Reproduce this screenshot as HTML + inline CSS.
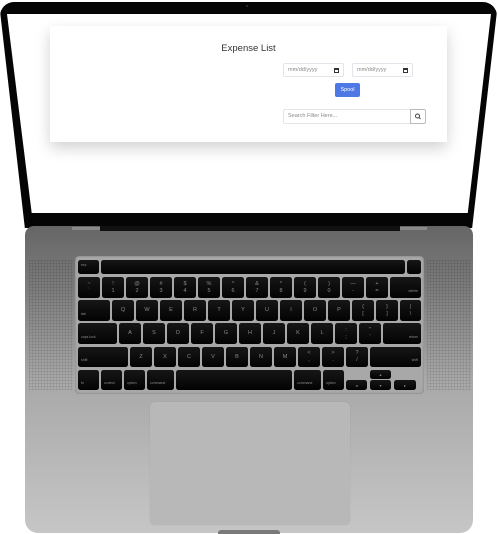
<!DOCTYPE html>
<html><head><meta charset="utf-8"><style>
*{box-sizing:border-box;margin:0;padding:0}
html,body{width:498px;height:534px;background:#fff;overflow:hidden;font-family:"Liberation Sans",sans-serif}
.abs{position:absolute}
.lid{left:0;top:2px;width:497px;height:226px;background:#050505;clip-path:polygon(0.6% 0,99.4% 0,100% 4%,95% 100%,5% 100%,0 4%);border-radius:14px 14px 6px 6px}
.scr{left:7px;top:14px;width:484px;height:199px;background:#fff;clip-path:polygon(0 0,100% 0,95.2% 100%,5.1% 100%)}
.base{left:25px;top:226px;width:448px;height:307px;border-radius:9px 9px 13px 13px;background:linear-gradient(#666 0%,#7c7c7c 20%,#a8a8a8 50%,#c6c6c6 100%)}
.card{left:50px;top:26px;width:397px;height:116px;background:#fff;box-shadow:0 6px 14px rgba(0,0,0,.18)}
.inp{background:#fff;border:1px solid #e2e5ea;border-radius:2px;font-size:5.5px;color:#888;padding-left:4px;line-height:12px}
.key{background:linear-gradient(#161616,#030303);border-radius:2.5px;color:#8a8a8a;font-size:5.5px;display:flex;align-items:center;justify-content:center;flex:none;width:22px;height:100%;position:relative;line-height:7px;text-align:center}
.sm{font-size:3.5px;align-items:flex-end;justify-content:flex-start;padding:0 0 3px 3px}
.smr{font-size:3.5px;align-items:flex-end;justify-content:flex-end;padding:0 3px 3px 0}
.row{position:absolute;left:78px;width:343px;display:flex;gap:2px}
.grill{top:260px;width:44px;height:130px;background-image:repeating-linear-gradient(90deg,rgba(0,0,0,.08) 0 1px,transparent 1px 3px),repeating-linear-gradient(0deg,rgba(0,0,0,.08) 0 1px,transparent 1px 3px)}
</style></head><body>
<div class="abs lid"></div>
<div class="abs" style="left:246px;top:5px;width:2px;height:2px;border-radius:50%;background:#333"></div>
<div class="abs scr"></div>
<div class="abs card">
 <div class="abs" style="left:0;width:397px;top:17px;text-align:center;font-size:9.5px;color:#333">Expense List</div>
 <div class="abs inp" style="left:233px;top:37px;width:61px;height:14px">mm/dd/yyyy<span style="position:absolute;right:4px;top:4px;width:5px;height:5px;border:1px solid #333;border-top-width:2px"></span></div>
 <div class="abs inp" style="left:302px;top:37px;width:61px;height:14px">mm/dd/yyyy<span style="position:absolute;right:4px;top:4px;width:5px;height:5px;border:1px solid #333;border-top-width:2px"></span></div>
 <div class="abs" style="left:285px;top:57px;width:25px;height:14px;background:#4e78e4;border-radius:2px;color:#fff;font-size:5.5px;text-align:center;line-height:14px">Spool</div>
 <div class="abs inp" style="left:233px;top:83px;width:128px;height:15px;line-height:13px;border-radius:2px 0 0 2px">Search Filter Here...</div>
 <div class="abs" style="left:360px;top:83px;width:16px;height:15px;border:1px solid #bbb;border-radius:0 2px 2px 0;background:#fff">
  <svg width="14" height="13" viewBox="0 0 14 13" style="position:absolute;left:0;top:0"><circle cx="6.5" cy="6" r="2" fill="none" stroke="#444" stroke-width="1"/><path d="M8 7.5L9.5 9" stroke="#444" stroke-width="1"/></svg>
 </div>
</div>
<div class="abs base"></div>
<div class="abs" style="left:72px;top:227px;width:28px;height:3px;background:#8a8a8a"></div>
<div class="abs" style="left:399px;top:227px;width:28px;height:3px;background:#8a8a8a"></div>
<div class="abs" style="left:100px;top:226px;width:300px;height:5px;background:#111"></div>
<div class="abs" style="left:218px;top:530px;width:62px;height:4px;background:#7a7a7a;border-radius:3px 3px 0 0"></div>
<div class="abs grill" style="left:29px"></div>
<div class="abs grill" style="left:427px"></div>
<div class="abs" style="left:75px;top:256px;width:349px;height:138px;background:#a8a8a8;border-radius:4px;box-shadow:inset 0 0 2px rgba(0,0,0,.3)"></div>
<div class="abs" style="left:150px;top:402px;width:200px;height:123px;background:#b8b8b8;border-radius:5px;box-shadow:0 0 1px rgba(0,0,0,.15)"></div>

<div class="row" style="top:260px;height:14px">
 <div class="key sm" style="width:21px;align-items:center">esc</div>
 <div class="key" style="flex:1"></div>
 <div class="key" style="width:14px"></div>
</div>
<div class="row" style="top:277px;height:21px">
 <div class="key">~<br>`</div><div class="key">!<br>1</div><div class="key">@<br>2</div><div class="key">#<br>3</div><div class="key">$<br>4</div><div class="key">%<br>5</div><div class="key">^<br>6</div><div class="key">&amp;<br>7</div><div class="key">*<br>8</div><div class="key">(<br>9</div><div class="key">)<br>0</div><div class="key">—<br>-</div><div class="key">+<br>=</div><div class="key smr" style="flex:1">delete</div>
</div>
<div class="row" style="top:300px;height:21px">
 <div class="key sm" style="width:32px">tab</div><div class="key">Q</div><div class="key">W</div><div class="key">E</div><div class="key">R</div><div class="key">T</div><div class="key">Y</div><div class="key">U</div><div class="key">I</div><div class="key">O</div><div class="key">P</div><div class="key">{<br>[</div><div class="key">}<br>]</div><div class="key" style="flex:1">|<br>\</div>
</div>
<div class="row" style="top:323px;height:21px">
 <div class="key sm" style="width:39px">caps lock</div><div class="key">A</div><div class="key">S</div><div class="key">D</div><div class="key">F</div><div class="key">G</div><div class="key">H</div><div class="key">J</div><div class="key">K</div><div class="key">L</div><div class="key">:<br>;</div><div class="key">"<br>'</div><div class="key smr" style="flex:1">return</div>
</div>
<div class="row" style="top:347px;height:20px">
 <div class="key sm" style="width:50px">shift</div><div class="key">Z</div><div class="key">X</div><div class="key">C</div><div class="key">V</div><div class="key">B</div><div class="key">N</div><div class="key">M</div><div class="key">&lt;<br>,</div><div class="key">&gt;<br>.</div><div class="key">?<br>/</div><div class="key smr" style="flex:1">shift</div>
</div>
<div class="row" style="top:370px;height:20px">
 <div class="key sm" style="width:21px">fn</div><div class="key sm" style="width:21px">control</div><div class="key sm" style="width:21px">option</div><div class="key sm" style="width:27px">command</div><div class="key" style="width:116px"></div><div class="key sm" style="width:27px">command</div><div class="key sm" style="width:21px">option</div>
 <div style="position:relative;width:70px;height:20px;flex:none">
  <div class="key" style="position:absolute;left:0;top:10px;width:21px;height:10px;font-size:4px">◂</div>
  <div class="key" style="position:absolute;left:24px;top:0;width:21px;height:9px;font-size:4px">▴</div>
  <div class="key" style="position:absolute;left:24px;top:10px;width:21px;height:10px;font-size:4px">▾</div>
  <div class="key" style="position:absolute;left:48px;top:10px;width:22px;height:10px;font-size:4px">▸</div>
 </div>
</div>
</body></html>
